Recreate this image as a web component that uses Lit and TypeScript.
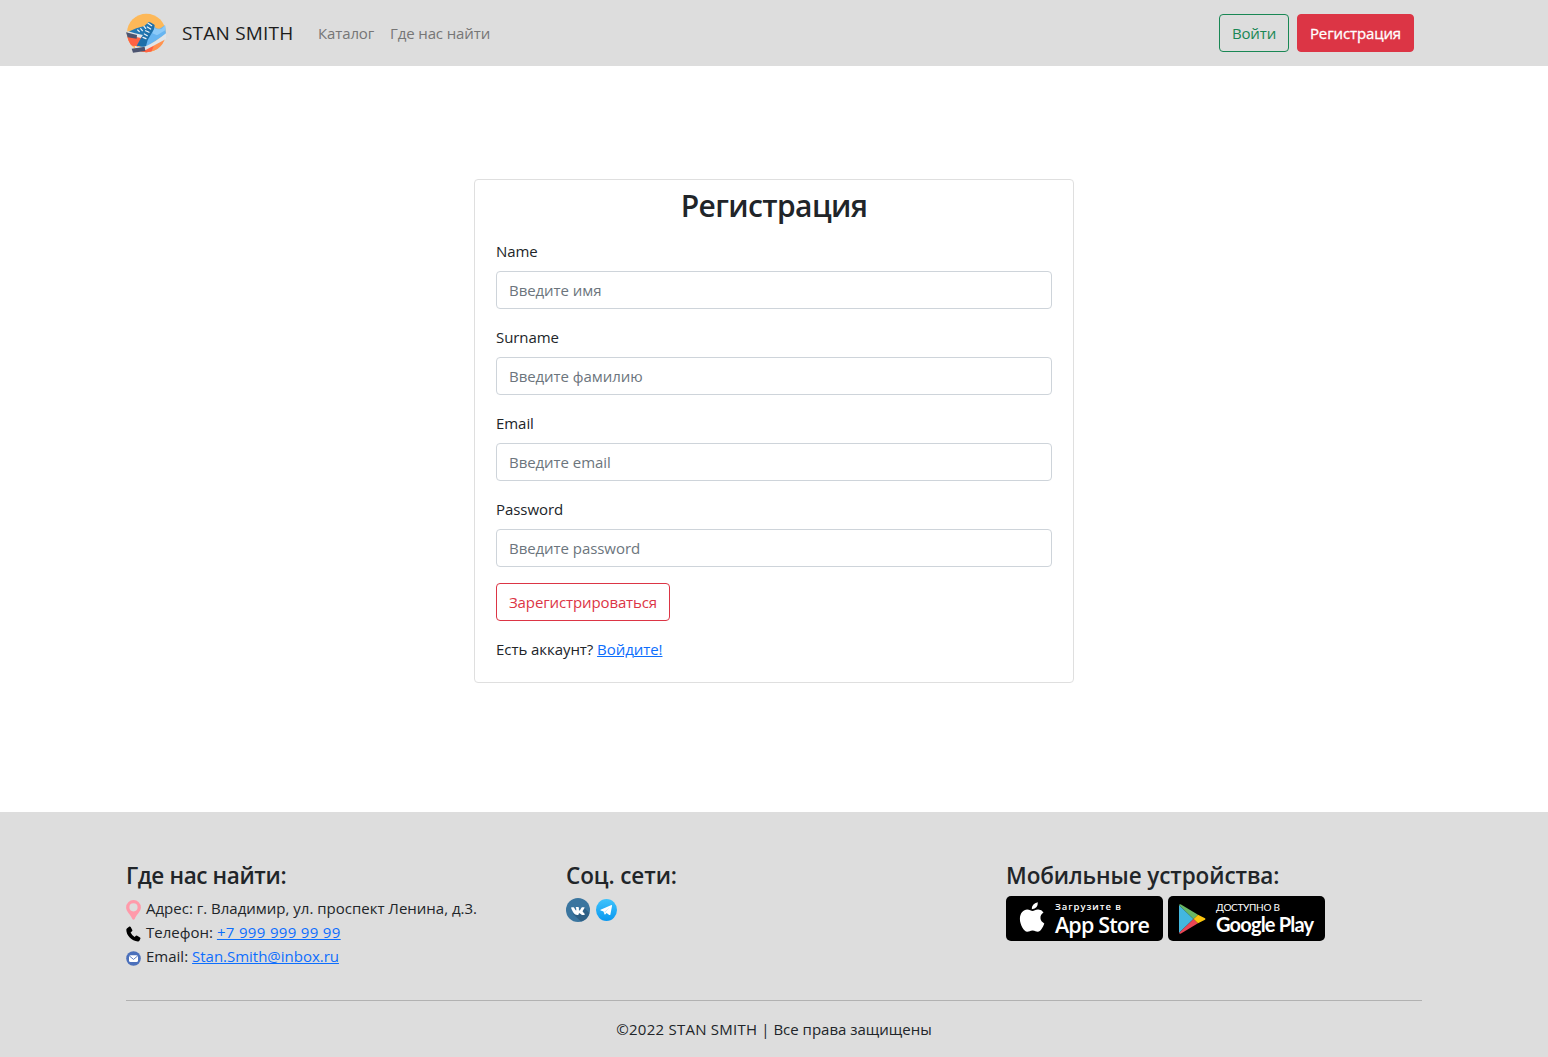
import { LitElement, html, css, svg } from "lit";
import { customElement } from "lit/decorators.js";

const shoeLogo = svg`
<svg class="logo" viewBox="3 3 120 120">
  <defs><clipPath id="disc"><circle cx="64" cy="63" r="58"/></clipPath></defs>
  <g clip-path="url(#disc)">
    <rect x="3" y="3" width="120" height="120" fill="#fdb858"/>
    <path d="M3 74L56 70L38 104L14 100Z" fill="#ff6243"/>
    <path d="M50 123L123 70V123Z" fill="#ff9251"/>
    <path d="M50 110L86 102L78 123H45Z" fill="#ff6243"/>
  </g>
  <path d="M8 60L34 49L58 42L72 29L84 40L60 76L22 70Z" fill="#2378b3"/>
  <path d="M7 57L30 64L54 69L48 78L8 70Z" fill="#dfe5ea"/>
  <path d="M3 61L36 69L35 80L8 76Z" fill="#4c5470"/>
  <path d="M36 100L50 78L84 36Q90 52 104 50L120 40L123 66L60 108Z" fill="#67b5f1"/>
  <path d="M86 44Q94 56 110 50L120 40L122 54L96 70L82 64Z" fill="#8bcaf9"/>
  <path d="M35 101L48 78L68 52L76 31L89 39L87 52L68 84L62 106Z" fill="#1d6fa9"/>
  <path d="M29 101Q46 108 64 102Q92 90 123 64V81L62 114L32 112Z" fill="#dfe5ea"/>
  <path d="M20 110L59 104L61 117L24 122Z" fill="#4c5470"/>
  <path d="M38 54L43 59M47 50L52 56M57 43L62 49M69 34L80 41M67 45L77 51M62 56L72 61M58 66L67 71M54 76L63 80" fill="none" stroke="#eef3f7" stroke-width="3.6" stroke-linecap="round"/>
</svg>`;

const pinIcon = svg`
<svg class="mini" viewBox="0 0 15 20"><path fill-rule="evenodd" d="M7.5 0A7.4 7.4 0 0 0 .1 7.4C.1 11.5 4.8 14.5 6.3 19Q7.5 20.6 8.7 19C10.2 14.5 14.9 11.5 14.9 7.4A7.4 7.4 0 0 0 7.5 0ZM7.5 3.2A4.1 4.1 0 1 1 7.5 11.4A4.1 4.1 0 0 1 7.5 3.2Z" fill="#ff9aaa"/></svg>`;
const phoneIcon = svg`
<svg class="mini" viewBox="0 0 15 16"><path d="M1.1 2.2L3.4.6Q4.2.2 4.7 1L6.3 4.1Q6.6 4.8 6 5.3L4.6 6.5Q5.7 9.1 8.6 10.9L9.9 9.8Q10.5 9.3 11.2 9.7L14 11.4Q14.7 11.9 14.4 12.7L13.4 14.7Q12.9 15.5 11.9 15.4C5.6 14.9.3 9.5.3 3.8Q.3 2.8 1.1 2.2Z"/></svg>`;
const mailIcon = svg`
<svg class="mini" viewBox="0 0 15 15"><circle cx="7.5" cy="7.5" r="7.3" fill="#4b70bb"/><rect x="3" y="4.3" width="9" height="6.8" rx="1.6" fill="#fff"/><path d="M3.3 4.9L7.5 8.4L11.7 4.9" fill="none" stroke="#4b70bb" stroke-width=".9"/></svg>`;

const vkIcon = svg`
<svg class="vk" viewBox="0 0 24 24"><circle cx="12" cy="12" r="12" fill="#3a759f"/><path d="M18.5 10L23.4 15A12 12 0 0 1 15 23.6L7 16Z" fill="#2e6085"/>
<path transform="translate(0 .6)" d="M11.3 16.3H12.2Q12.7 16.2 12.7 15.4Q12.8 14.2 13.7 14.7L15.2 16Q15.6 16.3 16.3 16.3H18.1Q19.3 16.1 18.6 15.1Q18.1 14.4 16.8 13.1Q16.4 12.7 16.8 12.1L18.5 9.5Q18.8 8.7 18.1 8.7H16.1Q15.6 8.7 15.4 9.1Q14.5 11.2 13.5 11.9Q12.9 12.1 12.9 11.3V9.4Q12.9 8.6 12.1 8.5H10Q9.5 8.6 9.9 9.1Q10.4 9.6 10.3 11.6Q9.7 12.5 8.3 9.3Q8.1 8.7 7.5 8.7H5.7Q4.9 8.8 5.2 9.6C7 13.6 8.4 16.3 11.3 16.3Z" fill="#fff"/></svg>`;
const telegramIcon = svg`
<svg class="tg" viewBox="0 0 21 22"><defs><linearGradient id="sky" x1="0" y1="0" x2="0" y2="1"><stop stop-color="#3fc3fb"/><stop offset="1" stop-color="#0a98f0"/></linearGradient></defs><ellipse cx="10.5" cy="11" rx="10.5" ry="10.9" fill="url(#sky)"/>
<path d="M4.5 10.8L15.5 6.1Q16.2 6 16 6.9L14.4 15.4Q14.2 16.5 13.2 15.9L10.6 14L9.2 15.5Q8.6 15.9 8.4 15L7.5 12.5L4.7 11.6Q4 11.2 4.5 10.8Z" fill="#fff"/><path d="M8.5 12.8L13.6 8.5L9.4 13.1L9 14.9Z" fill="#b9dff5"/></svg>`;

const appleIcon = svg`
<svg class="apple" viewBox="0 0 26 31"><path d="M13.5 9C15 9 16.6 7.5 19.2 7.6Q22.8 7.8 24.5 10.6C20 13.3 20.7 19.4 25.3 21.4C23.9 25.2 21.5 29.6 18.8 29.7C16.8 29.7 16.2 28.4 13.6 28.4C11 28.4 10.2 29.7 8.3 29.7C5 29.8.9 22.6.9 17C.9 11 4.5 7.7 8.2 7.6C10.4 7.6 12.3 9 13.5 9Z" fill="#fff"/><path d="M12.8 7.3Q12.6 1.6 18.8.2Q19.2 6.4 12.8 7.3Z" fill="#fff"/></svg>`;
const playIcon = svg`
<svg class="play" viewBox="0 0 27 30"><path d="M0 1V29L14.5 15Z" fill="#43b7df"/><path d="M0 1L14.5 15L19 10.7L2 .4Q.5-.2 0 1Z" fill="#69b864"/><path d="M0 29L14.5 15L19 19.3L2 29.6Q.5 30.2 0 29Z" fill="#ea4655"/><path d="M14.5 15L19 10.7L26 14.3Q27 15 26 15.8L19 19.3Z" fill="#fbc50e"/></svg>`;

const fields = [
  { label: "Name", hint: "Введите имя" },
  { label: "Surname", hint: "Введите фамилию" },
  { label: "Email", hint: "Введите email" },
  { label: "Password", hint: "Введите password" },
];

@customElement("app-root")
export class AppRoot extends LitElement {
  static styles = css`
    :host { display: flex; flex-direction: column; height: 1057px; background: #fff; color: #212529;
      font: 400 15px/24px "Open Sans", "Noto Sans", sans-serif; letter-spacing: -.06px; }
    * { box-sizing: border-box; }
    h2, h3, p { margin: 0; font-weight: 600; }
    p { font-weight: 400; }
    svg { display: block; flex: none; }
    a { color: #0d6efd; text-decoration: underline; text-underline-offset: 1px; text-decoration-thickness: 1px; }
    header { height: 66px; background: #ddd; padding: 0 134px 0 126px; display: flex; align-items: center; flex: none; }
    .logo { width: 40px; height: 40px; }
    .brand { font-size: 19px; line-height: 30px; margin-left: 16px; width: 136px; white-space: nowrap; color: #1c1c1c; letter-spacing: .2px; }
    .nav { color: #767676; white-space: nowrap; width: 72px; letter-spacing: -.12px; }
    .nav.where { width: auto; }
    .spacer { flex: 1; }
    .btn { height: 38px; border: 1px solid; border-radius: 4px; background: none; font: inherit; letter-spacing: -.12px; padding: 0; white-space: nowrap;
      display: flex; align-items: center; justify-content: center; }
    .login { width: 70px; color: #198754; margin-right: 8px; }
    .signup { width: 117px; background: #dc3545; border-color: #dc3545; color: #fff; -webkit-text-stroke: .3px #fff; }
    main { flex: 1; display: flex; justify-content: center; align-items: flex-start; padding-top: 113px; }
    .card { width: 600px; height: 504px; border: 1px solid #dfdfdf; border-radius: 4px; padding: 7px 21px 0; }
    h2 { font-size: 30px; line-height: 38px; text-align: center; margin-bottom: 14px; letter-spacing: -.6px; }
    .field { display: flex; flex-direction: column; gap: 8px; margin-bottom: 16px; }
    input { height: 38px; border: 1px solid #ced4da; border-radius: 4px; padding: 0 12px; font: inherit; letter-spacing: inherit; width: 100%; background: #fff; }
    input::placeholder { color: #6c757d; opacity: 1; }
    .submit { width: 174px; color: #dc3545; margin-bottom: 16px; }
    footer { height: 245px; background: #ddd; padding: 49px 126px 0; flex: none; }
    .cols { display: grid; grid-template-columns: 440px 440px 1fr; height: 139px; white-space: nowrap; }
    h3 { font-size: 22.5px; line-height: 29px; margin-bottom: 6px; letter-spacing: -.1px; }
    .h-where { letter-spacing: -.37px; }
    .line { display: flex; align-items: center; height: 24px; letter-spacing: 0; }
    .mini { width: 15px; margin-right: 5px; position: relative; top: 2px; }
    .line a { margin-left: 4px; }
    .line .num { letter-spacing: .33px; }
    .line .mail { letter-spacing: -.02px; }
    .social { display: flex; align-items: center; gap: 6px; padding-top: 2px; }
    .vk { width: 24px; height: 24px; }
    .tg { width: 21px; height: 22px; }
    .stores { display: flex; gap: 5px; }
    .badge { width: 157px; height: 45px; border-radius: 5px; background: #000; color: #fff; display: flex; }
    .apple { width: 26px; height: 31px; margin: 6px 0 0 13px; }
    .play { width: 27px; height: 30px; margin: 8px 0 0 11px; }
    .store { margin-left: 10px; padding-top: 5px; }
    .google { margin-left: 10px; }
    .small { font: 600 9.5px/12px "Open Sans", sans-serif; letter-spacing: .95px; }
    .big { font: 600 21.5px/24px "Open Sans", sans-serif; letter-spacing: -.85px; }
    .google .small { font: 400 10px/12px Lato, sans-serif; letter-spacing: -.3px; }
    .google .big { font: 700 20px/23px Lato, sans-serif; letter-spacing: -.8px; }
    .copy { border-top: 1px solid #b1b1b1; padding-top: 16px; text-align: center; letter-spacing: 0; }
    .owner { letter-spacing: .25px; }
  `;

  render() {
    return html`
      <header>
        ${shoeLogo}
        <span class="brand">STAN SMITH</span>
        <span class="nav">Каталог</span><span class="nav where">Где нас найти</span>
        <span class="spacer"></span>
        <button class="btn login">Войти</button>
        <button class="btn signup">Регистрация</button>
      </header>
      <main>
        <section class="card">
          <h2>Регистрация</h2>
          ${fields.map((f) => html`<label class="field"><span>${f.label}</span><input placeholder=${f.hint} /></label>`)}
          <button class="btn submit">Зарегистрироваться</button>
          <p>Есть аккаунт? <a>Войдите!</a></p>
        </section>
      </main>
      <footer>
        <div class="cols">
          <div>
            <h3 class="h-where">Где нас найти:</h3>
            <div class="line">${pinIcon}<span>Адрес: г. Владимир, ул. проспект Ленина, д.3.</span></div>
            <div class="line">${phoneIcon}<span>Телефон:</span><a class="num">+7 999 999 99 99</a></div>
            <div class="line">${mailIcon}<span>Email:</span><a class="mail">Stan.Smith@inbox.ru</a></div>
          </div>
          <div>
            <h3>Соц. сети:</h3>
            <div class="social">${vkIcon}${telegramIcon}</div>
          </div>
          <div>
            <h3>Мобильные устройства:</h3>
            <div class="stores">
              <div class="badge">${appleIcon}<div class="store"><div class="small">Загрузите в</div><div class="big">App Store</div></div></div>
              <div class="badge">${playIcon}<div class="store google"><div class="small">ДОСТУПНО В</div><div class="big">Google Play</div></div></div>
            </div>
          </div>
        </div>
        <p class="copy"><span class="owner">©2022 STAN SMITH</span>&nbsp;|&nbsp;<span class="rights">Все права защищены</span></p>
      </footer>
    `;
  }
}
